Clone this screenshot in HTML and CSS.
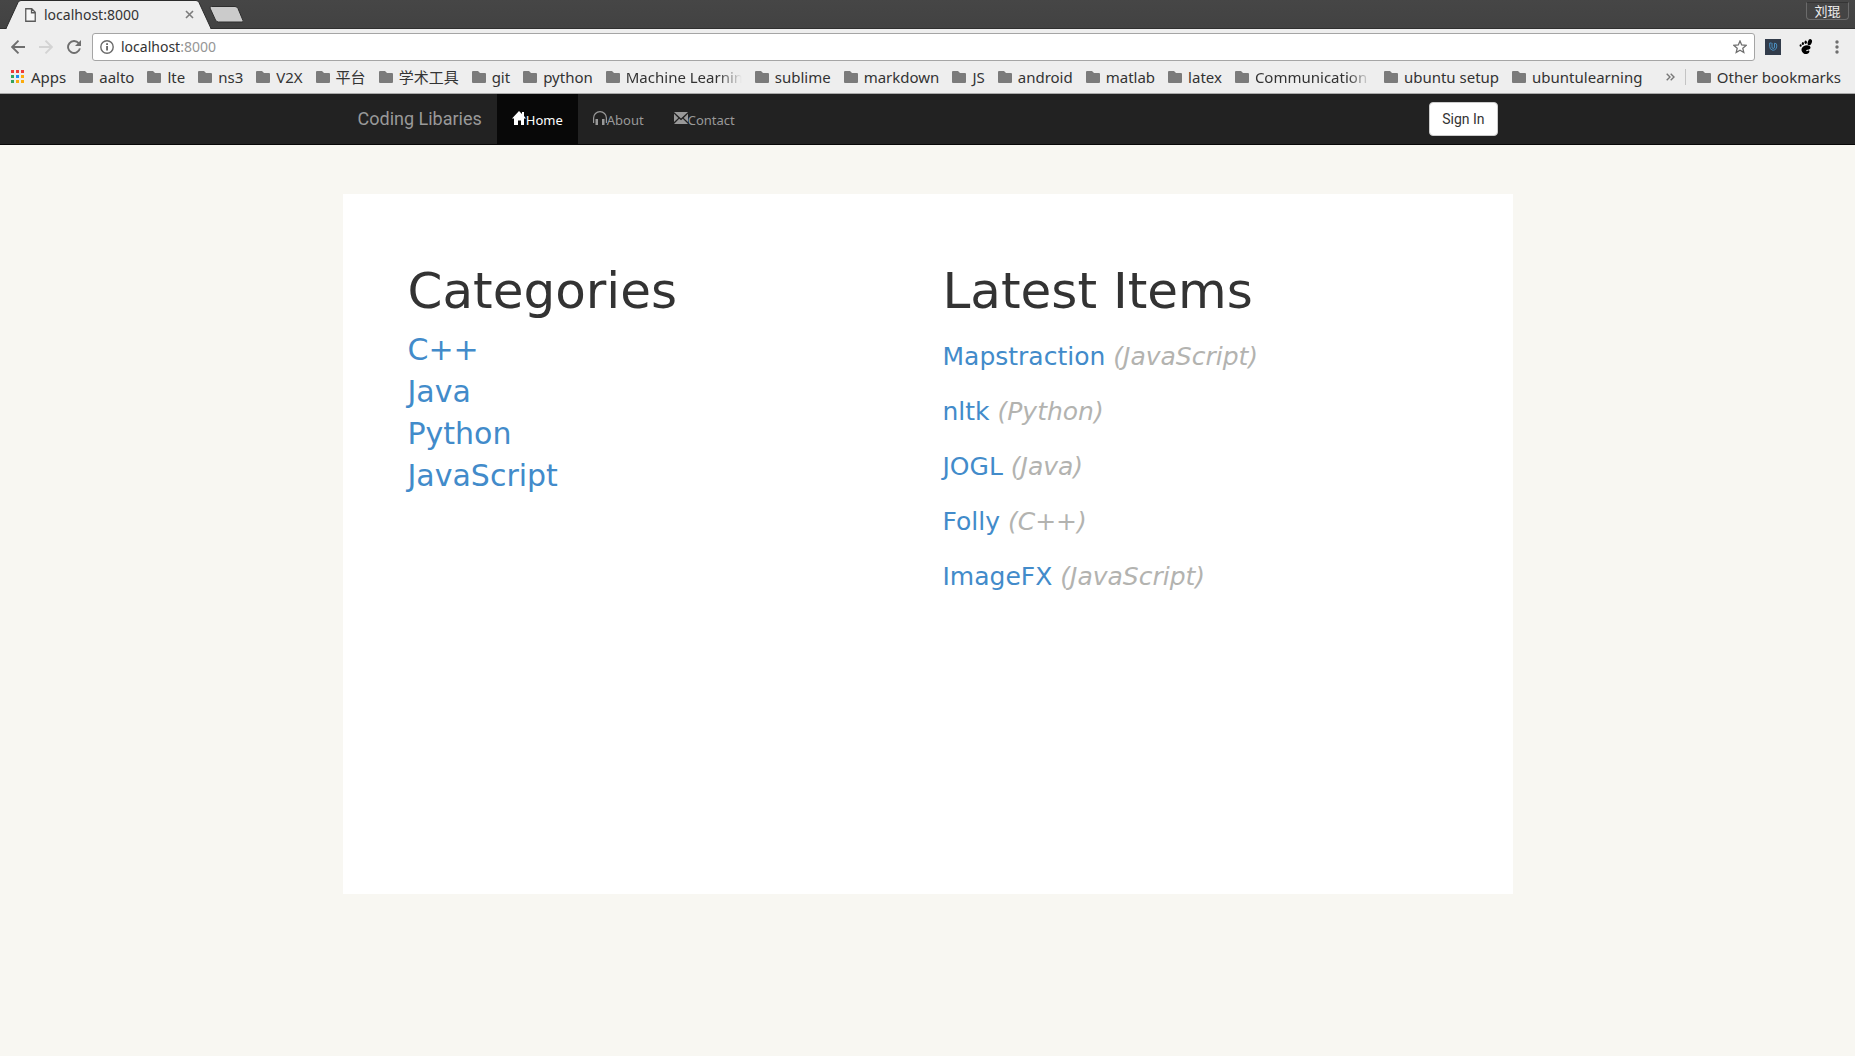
FILE: index.html
```html
<!DOCTYPE html>
<html lang="en">
<head>
<meta charset="utf-8">
<title>localhost:8000</title>
<link rel="stylesheet" href="styles.css">
</head>
<body>
<svg class="defs" aria-hidden="true">
  <symbol id="folder" viewBox="0 0 14 12"><path d="M1 0h5l2 2h5a1 1 0 0 1 1 1v8a1 1 0 0 1-1 1H1a1 1 0 0 1-1-1V1a1 1 0 0 1 1-1z" fill="#7b7b7b"/></symbol>
</svg>

<header class="browser">
  <div class="tabstrip">
    <div class="tab">
      <svg class="tab-shape" width="208" height="29" viewBox="0 0 208 29" aria-hidden="true"><path d="M0 28.5h2L14 2.500Q15 .5 17 .5H192Q194 .5 195 2.500L207 28.500H208V29H0z" fill="#eee" stroke="#2c2c2c"/><path d="M3 28h203v1H3z" fill="#eee"/></svg>
      <svg class="tab-page" width="11" height="14" viewBox="0 0 11 14" aria-hidden="true"><path d="M.75.75h6l3.500 3.500v9H.75zM6.500.75v4h4" fill="#fff" fill-opacity=".6" stroke="#5a5a5a" stroke-width="1.300"/></svg>
      <span class="tab-title">localhost:8000</span>
      <button class="tab-close" aria-label="Close tab"><svg width="9" height="9" viewBox="0 0 9 9"><path d="M1 1l7 7M8 1L1 8" stroke="#7c7c7c" stroke-width="1.600"/></svg></button>
    </div>
    <button class="new-tab" aria-label="New tab"><svg width="34" height="17" viewBox="0 0 34 17"><path d="M2.500.5H26q2 0 3 2l5 12q.5 1.500-1 1.500H9.500q-2 0-3-2L1 2Q.5.5 2.500.5z" fill="#cbcbcb" stroke="#2e2e2e"/></svg></button>
    <button class="user">刘琨</button>
  </div>

  <div class="toolbar">
    <button class="tool" aria-label="Back"><svg width="14" height="14" viewBox="0 0 14 14"><path d="M14 7H1.500M7.500.7L1.200 7l6.300 6.300" fill="none" stroke="#6e6e6e" stroke-width="1.900"/></svg></button>
    <button class="tool" aria-label="Forward"><svg width="14" height="14" viewBox="0 0 14 14"><path d="M0 7h12.500M6.500.7L12.800 7l-6.300 6.300" fill="none" stroke="#d3d3d3" stroke-width="1.900"/></svg></button>
    <button class="tool" aria-label="Reload"><svg width="14" height="14" viewBox="0 0 14 14"><path d="M11.700 3.200A6 6 0 1 0 12.900 8.400" fill="none" stroke="#6e6e6e" stroke-width="1.900"/><path d="M14 0v6H8z" fill="#6e6e6e"/></svg></button>
    <div class="omnibox">
      <svg width="14" height="14" viewBox="0 0 14 14" aria-hidden="true"><circle cx="7" cy="7" r="6.200" fill="none" stroke="#6a6a6a" stroke-width="1.400"/><path d="M6.200 6h1.700v4.500H6.200zM6.200 3.300h1.700v1.600H6.200z" fill="#5a5a5a"/></svg>
      <span class="url" role="textbox" aria-label="Address" contenteditable="true">localhost<span class="port">:8000</span></span>
      <button class="star" aria-label="Bookmark this page"><svg width="14" height="14" viewBox="0 0 14 14"><path d="M7 1l1.700 4 4.400.4-3.300 2.900 1 4.200L7 10.300l-3.800 2.200 1-4.200L.9 5.400 5.300 5z" fill="none" stroke="#6e6e6e" stroke-width="1.300"/></svg></button>
    </div>
    <button class="ext" aria-label="Udacity"><svg width="16" height="16" viewBox="0 0 16 16"><path d="M0 0h16v16H0z" fill="#323c4b"/><path d="M6.500 4H4.700v3.500q0 3 2.700 3.600M7 4v4q0 1.500 1.200 1.500T9.500 8V4.200q2.500-.2 2.300 2.800 0 3.200-2.500 4-1 .4-2 .1" fill="none" stroke="#4b8fc0"/></svg></button>
    <button class="ext" aria-label="GNOME extensions"><svg width="14" height="16" viewBox="0 0 14 16"><ellipse cx="10.800" cy="3.200" rx="2" ry="3.200" transform="rotate(20 10.800 3.200)"/><ellipse cx="6.700" cy="3.300" rx="1.200" ry="1.800"/><ellipse cx="3.900" cy="4.600" rx="1.100" ry="1.500"/><ellipse cx="1.600" cy="6.500" rx="1" ry="1.300"/><path d="M8 6.300c3.800 0 4.500 3 2.400 4-1.700.8-2.900.2-3.200 1.200-.1.800 1 .9 1.700.2.900-.8 1.900 0 1.400 1.300-.8 2-3.800 2.900-5.900 1.300C.8 11.500 2.500 6.500 8 6.300z"/></svg></button>
    <button class="ext" aria-label="Menu"><svg width="4" height="14" viewBox="0 0 4 14"><g fill="#6e6e6e"><circle cx="2" cy="2" r="1.700"/><circle cx="2" cy="7" r="1.700"/><circle cx="2" cy="12" r="1.700"/></g></svg></button>
  </div>

  <nav class="bookmarks" aria-label="Bookmarks">
    <a href="#"><svg width="14" height="14" viewBox="0 0 14 14"><path d="M0 0h3v3H0zM5 0h3v3H5zM10 0h3v3h-3z" fill="#f03a37"/><path d="M0 5h3v3H0zM0 10h3v3H0z" fill="#33a35c"/><path d="M5 5h3v3H5z" fill="#1a8cf0"/><path d="M10 5h3v3h-3zM5 10h3v3H5zM10 10h3v3h-3z" fill="#fbab0c"/></svg>Apps</a>
    <a href="#"><svg class="folder"><use href="#folder"/></svg>aalto</a>
    <a href="#"><svg class="folder"><use href="#folder"/></svg>lte</a>
    <a href="#"><svg class="folder"><use href="#folder"/></svg>ns3</a>
    <a href="#"><svg class="folder"><use href="#folder"/></svg>V2X</a>
    <a href="#"><svg class="folder"><use href="#folder"/></svg>平台</a>
    <a href="#"><svg class="folder"><use href="#folder"/></svg>学术工具</a>
    <a href="#"><svg class="folder"><use href="#folder"/></svg>git</a>
    <a href="#"><svg class="folder"><use href="#folder"/></svg>python</a>
    <a href="#"><svg class="folder"><use href="#folder"/></svg><span class="clipped">Machine Learning</span></a>
    <a href="#"><svg class="folder"><use href="#folder"/></svg>sublime</a>
    <a href="#"><svg class="folder"><use href="#folder"/></svg>markdown</a>
    <a href="#"><svg class="folder"><use href="#folder"/></svg>JS</a>
    <a href="#"><svg class="folder"><use href="#folder"/></svg>android</a>
    <a href="#"><svg class="folder"><use href="#folder"/></svg>matlab</a>
    <a href="#"><svg class="folder"><use href="#folder"/></svg>latex</a>
    <a href="#"><svg class="folder"><use href="#folder"/></svg><span class="clipped">Communication t</span></a>
    <a href="#"><svg class="folder"><use href="#folder"/></svg>ubuntu setup</a>
    <a href="#"><svg class="folder"><use href="#folder"/></svg>ubuntulearning</a>
    <button class="more" aria-label="More bookmarks"><svg width="9" height="8" viewBox="0 0 9 8"><path d="M.7.7L4 4 .7 7.300M4.700.7L8 4 4.700 7.300" fill="none" stroke="#777" stroke-width="1.400"/></svg></button>
    <a class="other" href="#"><svg class="folder"><use href="#folder"/></svg>Other bookmarks</a>
  </nav>
</header>

<nav class="navbar" aria-label="Main">
  <div class="container navbar-inner">
    <a class="brand" href="#">Coding Libaries</a>
    <a class="nav-link active" href="#"><svg width="14" height="14" viewBox="0 0 14 14"><path d="M7 0l3 3V1h2v4l2 2.500h-2V14H9V9.500H6V14H2V7.500H0z" fill="#fff"/></svg>Home</a>
    <a class="nav-link" href="#"><svg width="14" height="14" viewBox="0 0 14 14"><path d="M.6 12V7A6.400 6.400 0 0 1 13.400 7v5" fill="none" stroke="#999" stroke-width="1.200"/><path d="M2.500 8h2.500v6H2.500zM9 8h2.500v6H9z" fill="#999"/></svg>About</a>
    <a class="nav-link" href="#"><svg width="14" height="14" viewBox="0 0 14 14"><path d="M0 1h14L7 7.500zM0 2.800L4.300 7 0 11zM14 2.800L9.700 7 14 11zM5.200 7.700L7 9.300l1.800-1.600L14 13H0z" fill="#999"/></svg>Contact</a>
    <button class="sign-in">Sign In</button>
  </div>
</nav>

<main class="container panel">
  <section class="column">
    <h1>Categories</h1>
    <ul class="categories">
      <li><a href="#">C++</a></li>
      <li><a href="#">Java</a></li>
      <li><a href="#">Python</a></li>
      <li><a href="#">JavaScript</a></li>
    </ul>
  </section>
  <section class="column">
    <h1>Latest Items</h1>
    <ul class="latest">
      <li><a href="#">Mapstraction</a> <em>(JavaScript)</em></li>
      <li><a href="#">nltk</a> <em>(Python)</em></li>
      <li><a href="#">JOGL</a> <em>(Java)</em></li>
      <li><a href="#">Folly</a> <em>(C++)</em></li>
      <li><a href="#">ImageFX</a> <em>(JavaScript)</em></li>
    </ul>
  </section>
</main>
</body>
</html>
```
FILE: styles.css
```css
* { box-sizing: border-box; }

body {
  margin: 0;
  background: #f8f7f2;
  color: #333;
  font-family: "DejaVu Sans", sans-serif;
}

a { color: #428bca; text-decoration: none; }

button {
  margin: 0;
  padding: 0;
  border: 0;
  background: none;
  font: inherit;
  color: inherit;
}

svg { display: block; flex: none; }

ul { margin: 0; padding: 0; list-style: none; }

.defs { position: absolute; width: 0; height: 0; }

/* Browser window */
.browser {
  background: #eee;
  border-bottom: 1px solid #a9a9a9;
  color: #333;
  font: 14px/20px "Noto Sans", "Noto Sans CJK SC", sans-serif;
}

.tabstrip {
  display: flex;
  height: 29px;
  padding: 0 6px 0 4px;
  background: linear-gradient(#464646, #424242);
  border-bottom: 1px solid #2f2f2f;
}

.tab {
  position: relative;
  display: flex;
  align-items: center;
  width: 208px;
  height: 29px;
  padding: 0 18px 0 21px;
}

.tab-shape { position: absolute; top: 0; left: 0; }
.tab-page { position: relative; margin-right: 8px; }
.tab-title { position: relative; flex: 1; }
.tab-close { position: relative; }

.new-tab { align-self: center; margin-left: -3px; }

.user {
  align-self: flex-start;
  width: 43px;
  height: 18px;
  margin: 2px 0 0 auto;
  border: 1px solid #6b6b6b;
  border-top-color: #353535;
  border-radius: 0 0 4px 4px;
  color: #eee;
  font-size: 13px;
  line-height: 16px;
}

.toolbar {
  display: flex;
  align-items: center;
  height: 36px;
  padding: 0 16px 0 11px;
}

.tool { margin-right: 14px; }

.omnibox {
  display: flex;
  flex: 1;
  align-items: center;
  gap: 7px;
  height: 28px;
  margin-right: 10px;
  margin-left: -3px;
  padding: 0 7px;
  border: 1px solid #a5a5a5;
  border-radius: 3px;
  background: #fff;
}

.url { flex: 1; outline: 0; }
.port { color: #969696; }
.ext { margin-right: 18px; }
.ext:last-child { margin: 0 0 0 4px; }

.bookmarks {
  display: flex;
  align-items: center;
  gap: 13px;
  height: 28px;
  padding: 0 14px 5px 11px;
  font-size: 15px;
}

.bookmarks a {
  display: flex;
  align-items: center;
  gap: 6px;
  color: #333;
  white-space: nowrap;
}

.folder { width: 14px; height: 12px; }

.clipped {
  width: 116px;
  overflow: hidden;
  -webkit-mask-image: linear-gradient(to right, #000 80%, transparent);
  mask-image: linear-gradient(to right, #000 80%, transparent);
}

.more { margin-left: auto; margin-right: -3px; }
.bookmarks .other { padding-left: 11px; border-left: 1px solid #c4c4c4; height: 16px; }

/* Page */
.container { width: 1170px; max-width: 100%; margin: 0 auto; }

.navbar {
  background: #222;
  border-bottom: 1px solid #080808;
}

.navbar-inner {
  display: flex;
  align-items: stretch;
  min-height: 50px;
  padding: 0 15px;
}

.brand {
  padding: 15px 15px 15px 0;
  color: #999;
  font: 18px/20px Roboto, sans-serif;
}

.nav-link {
  display: flex;
  align-items: baseline;
  padding: 16px 15px 14px;
  color: #999;
  font: 13px/20px "Noto Sans", sans-serif;
}

.nav-link.active { background: #080808; color: #fff; }

.sign-in {
  align-self: center;
  height: 34px;
  margin-left: auto;
  padding: 0 12px;
  border: 1px solid #ccc;
  border-radius: 4px;
  background: #fff;
  color: #333;
  font: 14px/20px Roboto, sans-serif;
}

.panel {
  display: flex;
  min-height: 700px;
  margin-top: 49px;
  padding: 70px 50px;
  background: #fff;
}

.column { flex: 1; padding: 0 15px; }

h1 {
  margin: 0 0 10px;
  font-size: 50px;
  font-weight: 400;
  line-height: 55px;
}

.categories { font-size: 30px; line-height: 42px; }

.latest {
  display: grid;
  gap: 20px;
  padding-top: 10px;
  font-size: 25px;
  line-height: 35px;
}

.latest em { color: #b3b3b0; }
```
